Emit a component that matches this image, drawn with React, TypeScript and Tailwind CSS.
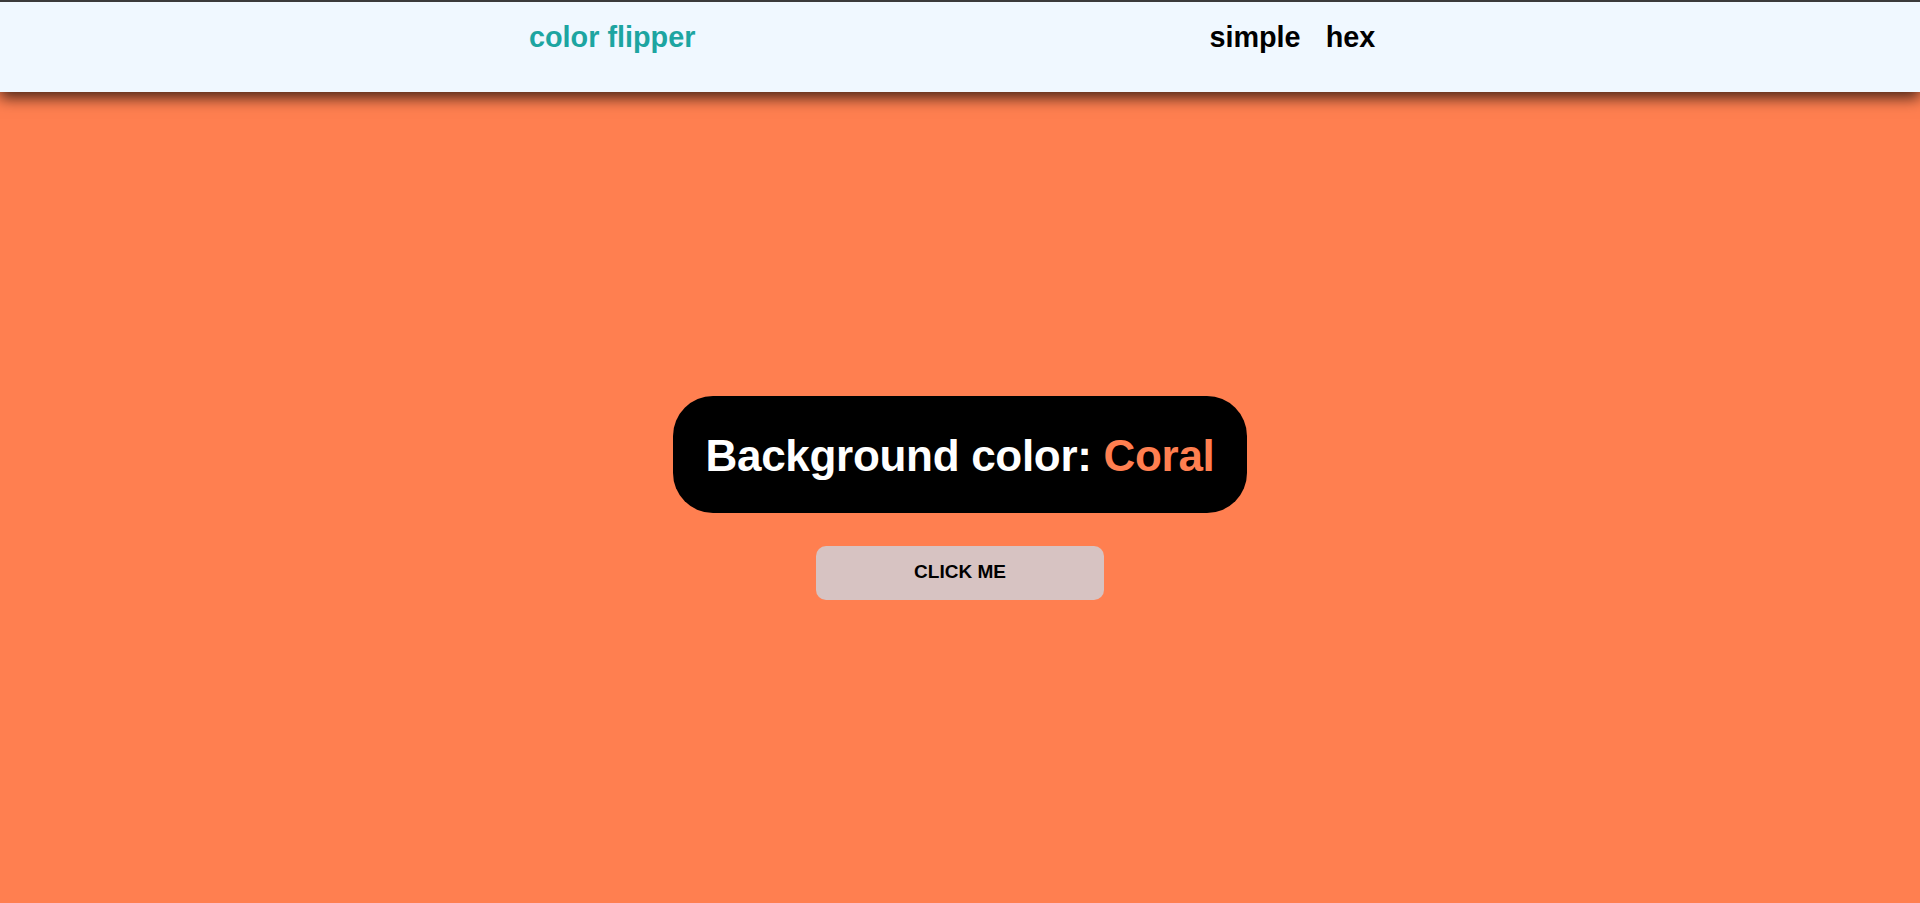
import { useState } from "react";

const colors = [
  { name: "Coral", value: "#ff7f50" },
  { name: "Teal", value: "#008080" },
  { name: "Crimson", value: "#dc143c" },
  { name: "SlateBlue", value: "#6a5acd" },
];

const Navbar = () => (
  <nav className="relative z-10 h-[92px] border-t-2 border-[#3b3b3b] bg-[#f0f8ff] shadow-[0_6px_14px_rgba(0,0,0,0.7)]">
    <div className="flex items-start pl-[529px] pt-[19px] font-['Liberation_Sans',Arial,sans-serif] text-[28.8px] font-bold leading-[33px]">
      <h4 className="text-[#1da5a1]">color flipper</h4>
      {/* Links */}
      <ul className="ml-[514px] flex gap-[25px] text-black">
        <li>
          <a href="#">simple</a>
        </li>
        <li>
          <a href="#">hex</a>
        </li>
      </ul>
    </div>
  </nav>
);

export default function App() {
  const [index, setIndex] = useState(0);
  const color = colors[index];

  return (
    <div
      className="flex h-[903px] flex-col overflow-hidden font-['Liberation_Sans',Arial,sans-serif]"
      style={{ backgroundColor: color.value }}
    >
      <Navbar />

      <main className="flex flex-1 flex-col items-center justify-center">
        <div className="flex h-[117px] w-[574px] items-center justify-center rounded-[40px] bg-black pt-[3px]">
          <h2 className="text-[44px] font-bold leading-none tracking-[-0.3px] text-white">
            Background color:{" "}
            <span style={{ color: color.value }}>{color.name}</span>
          </h2>
        </div>
        <button
          onClick={() => setIndex((index + 1) % colors.length)}
          className="mt-[33px] h-[54px] w-[288px] rounded-[10px] bg-[#d7c3c2] text-[19px] font-bold text-black"
        >
          CLICK ME
        </button>
      </main>
    </div>
  );
}
